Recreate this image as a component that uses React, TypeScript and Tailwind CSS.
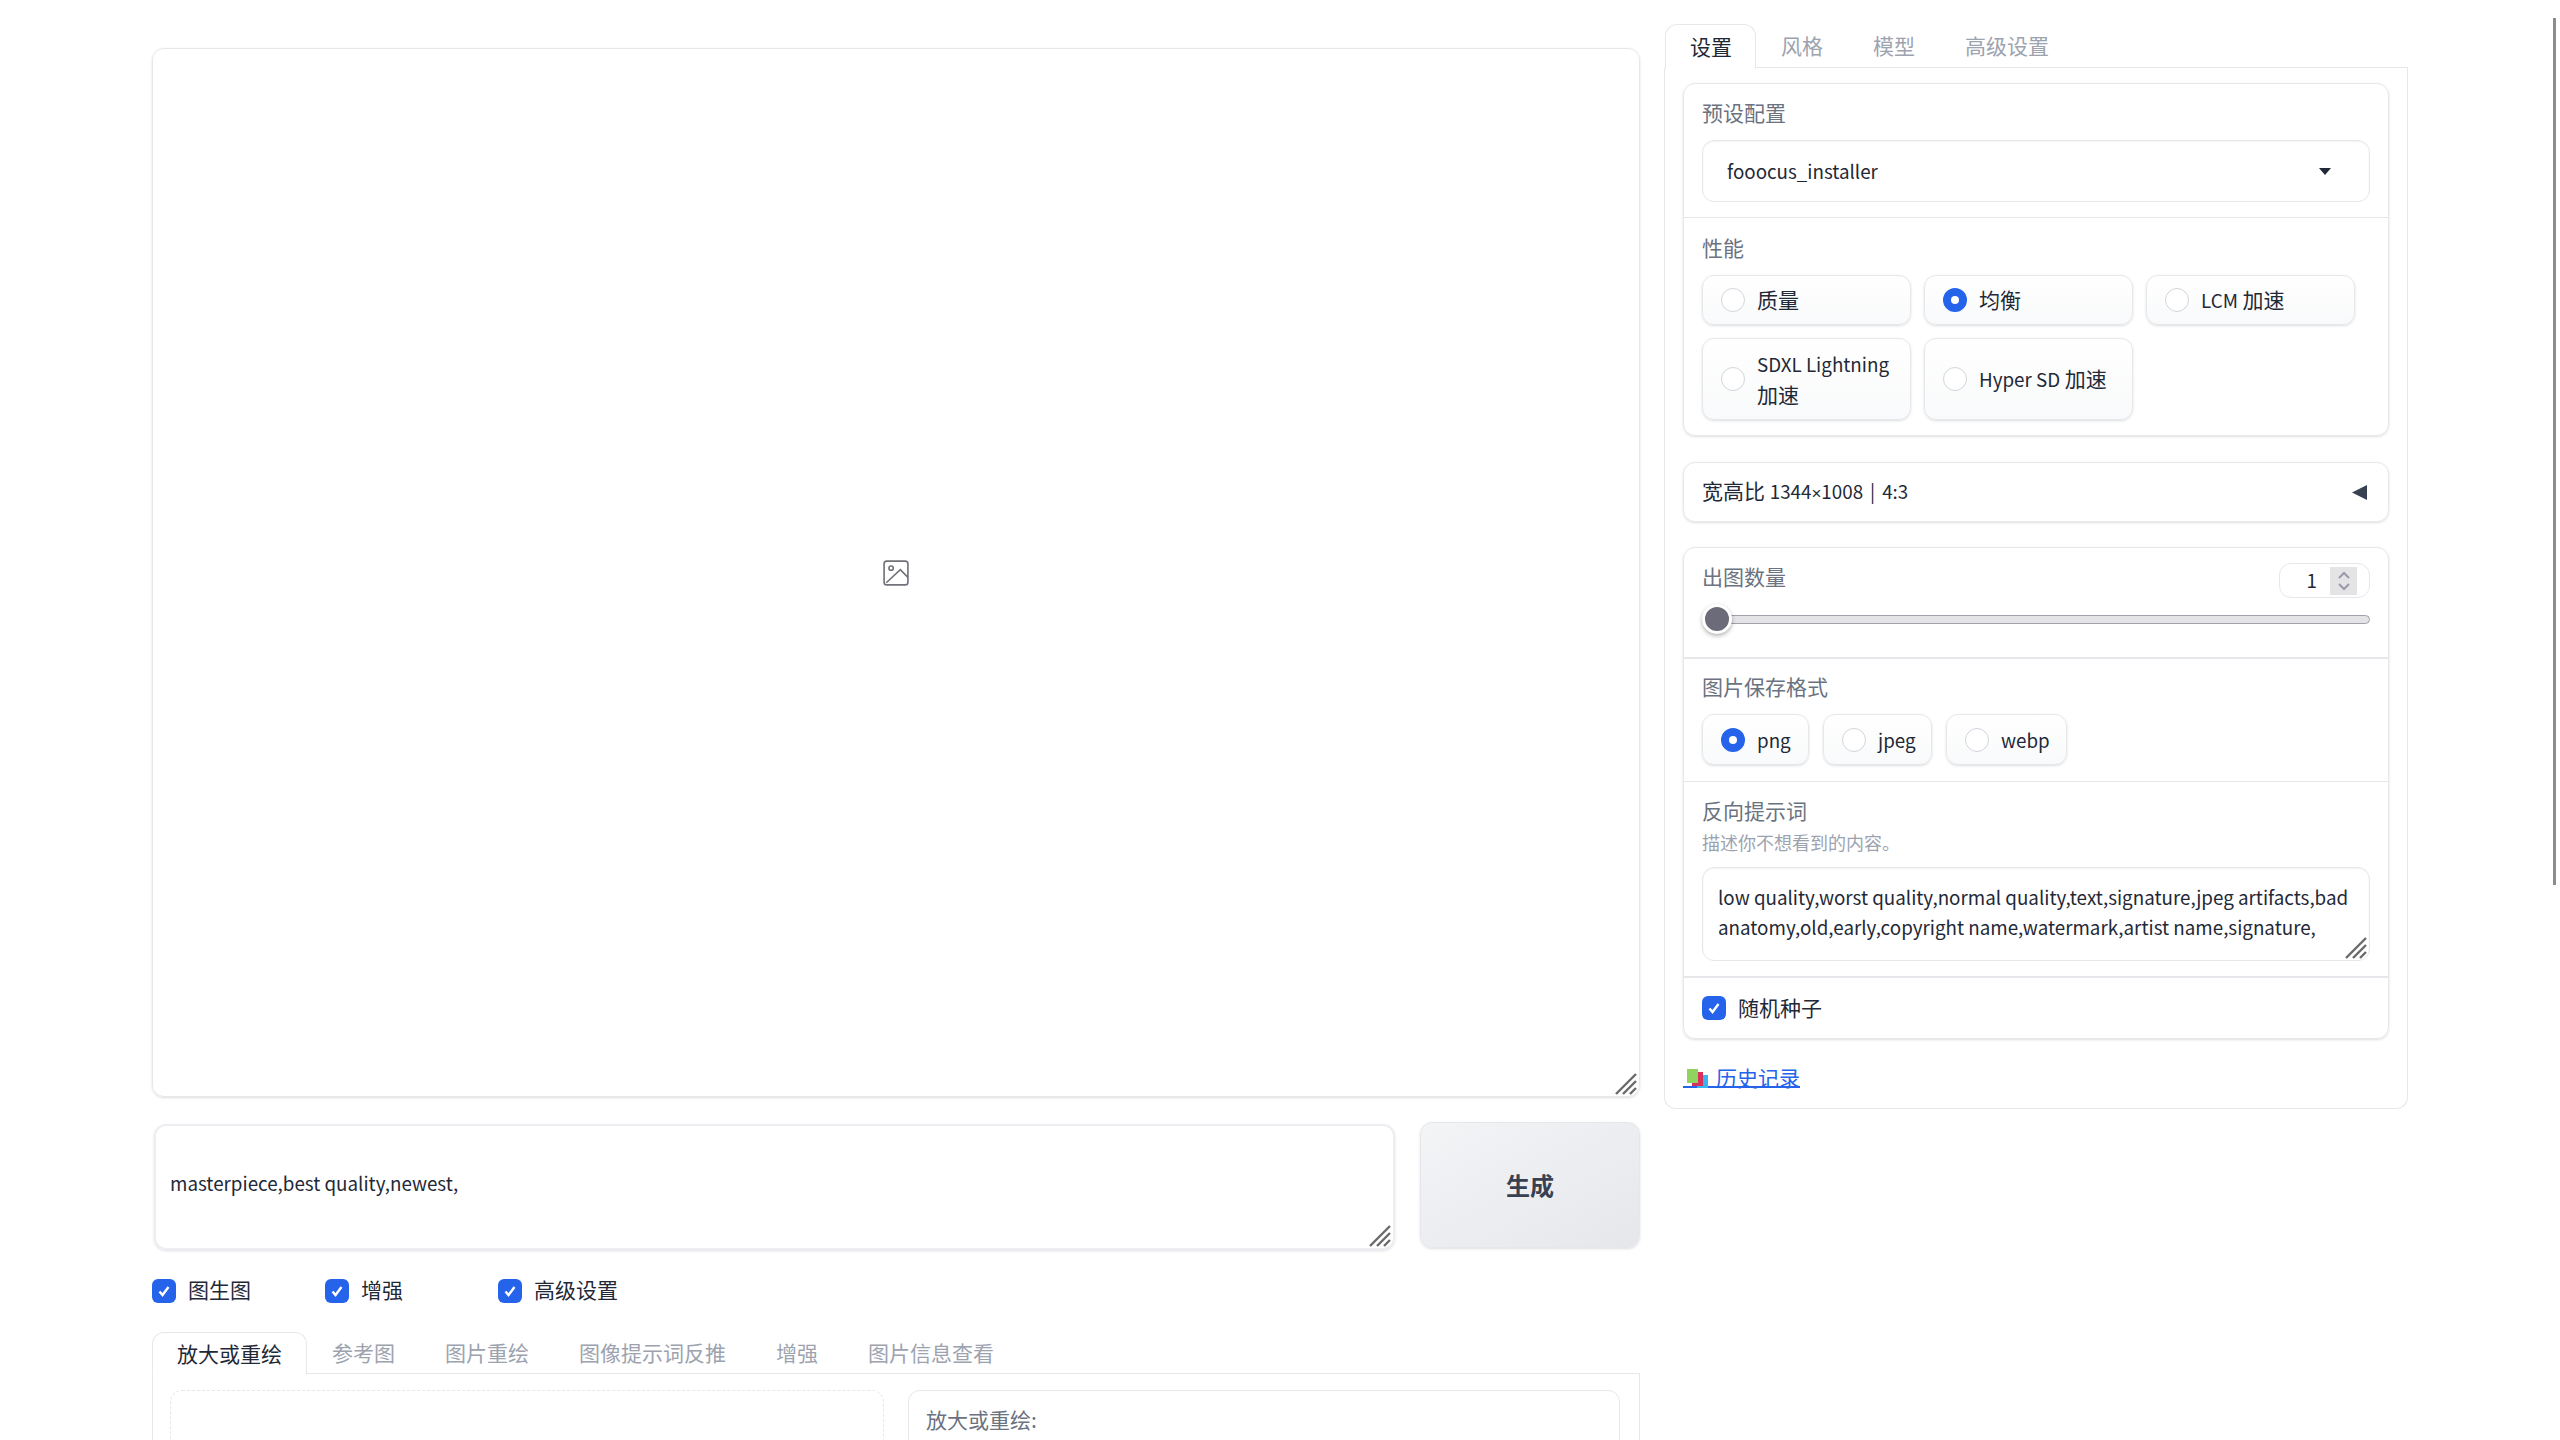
import React from 'react';

const Label = ({ children }: { children: React.ReactNode }) => (
  <div className="h-[30px] leading-[26px] text-[21px] text-[#6b7280]">{children}</div>
);

const En = ({ children }: { children: React.ReactNode }) => (
  <span className="text-[18.8px]">{children}</span>
);

const Handle = () => (
  <svg className="absolute right-[2px] bottom-[1px]" width="22" height="22" viewBox="0 0 22 22" fill="none" stroke="#6b6b6b" strokeWidth="2.4">
    <path d="M1 21 L21 1" />
    <path d="M8 21 L21 8" />
    <path d="M15 21 L21 15" />
  </svg>
);

const Check = () => (
  <span className="w-[24px] h-[24px] rounded-[6px] bg-[#2563eb] flex items-center justify-center shrink-0">
    <svg width="14" height="14" viewBox="0 0 14 14" fill="none" stroke="#fff" strokeWidth="2.4">
      <path d="M2.5 7.5 L5.5 11 L11.5 3" />
    </svg>
  </span>
);

const Radio = ({ label, on, className }: { label: React.ReactNode; on?: boolean; className: string }) => (
  <div className={`flex items-center gap-[12px] pl-[18px] pr-[8px] rounded-[12px] border border-[#e5e7eb] bg-gradient-to-b from-white to-[#f9fafb] shadow-sm ${className}`}>
    {on ? (
      <span className="w-[24px] h-[24px] rounded-full border-[8px] border-[#2563eb] bg-white shrink-0" />
    ) : (
      <span className="w-[24px] h-[24px] rounded-full border border-[#d1d5db] bg-white shrink-0" />
    )}
    <span className="-mt-[1px] text-[21px] leading-[31px] text-[#1f2937]">{label}</span>
  </div>
);

const tabs1 = ['风格', '模型', '高级设置'];
const tabs2 = ['参考图', '图片重绘', '图像提示词反推', '增强', '图片信息查看'];

export default function App() {
  return (
    <div className="relative h-[1440px] overflow-hidden bg-white flex items-start gap-[24px] pl-[152px] pt-[24px] font-['Noto_Sans_CJK_SC','Liberation_Sans',sans-serif] text-[#1f2937]">
      {/* left column */}
      <div className="w-[1488px] shrink-0 pt-[24px]">
        <div className="relative h-[1049px] rounded-[12px] border border-[#e5e7eb] shadow-sm flex items-center justify-center">
          <svg width="26" height="26" viewBox="0 0 24 24" fill="none" stroke="#71717a" strokeWidth="1.5">
            <rect x="1" y="1" width="22" height="22" rx="2.5" />
            <circle cx="7.5" cy="7.5" r="2" />
            <path d="M3 21 L16 9 L23 16" />
          </svg>
          <Handle />
        </div>

        <div className="mt-[25px] flex gap-[25px]">
          <div className="relative mt-[2px] ml-[2px] w-[1241px] h-[126px] rounded-[12px] border-2 border-[#eceef1] shadow-sm flex items-center pl-[14px] pb-[7px] text-[18.8px]">
            masterpiece,best quality,newest,
            <Handle />
          </div>
          <button className="w-[220px] h-[126px] rounded-[12px] border border-[#e5e7eb] bg-gradient-to-br from-[#f3f4f6] to-[#e5e7eb] shadow-sm text-[24px] font-bold text-[#374151]">
            生成
          </button>
        </div>

        <div className="mt-[29px] flex">
          {['图生图', '增强', '高级设置'].map(t => (
            <div key={t} className="w-[173px] flex items-center gap-[12px] h-[24px] text-[21px]">
              <Check />
              <span className="-mt-[2px]">{t}</span>
            </div>
          ))}
        </div>

        <div className="mt-[29px] flex h-[42px] border-b border-[#e5e7eb]">
          <div className="w-[155px] h-[43px] pl-[24px] leading-[40px] text-[21px] border border-[#e5e7eb] border-b-white rounded-t-[12px] bg-white">
            放大或重绘
          </div>
          {tabs2.map(t => (
            <div key={t} className="px-[25px] leading-[40px] text-[21px] text-[#9ca3af]">{t}</div>
          ))}
        </div>
        <div className="flex gap-[24px] h-[200px] border-x border-[#e5e7eb] px-[17px] pt-[16px]">
          <div className="w-[714px] h-[200px] rounded-[12px] border border-dashed border-[#e5e7eb]" />
          <div className="w-[712px] h-[200px] rounded-[12px] border border-[#e5e7eb] pl-[17px] pt-[15px]">
            <Label>放大或重绘:</Label>
          </div>
        </div>
      </div>

      {/* right column */}
      <div className="w-[744px] shrink-0">
        <div className="flex h-[44px] border-b border-[#e5e7eb] ml-[1px]">
          <div className="w-[91px] h-[45px] pl-[24px] leading-[42px] text-[21px] border border-[#e5e7eb] border-b-white rounded-t-[12px] bg-white">
            设置
          </div>
          {tabs1.map(t => (
            <div key={t} className="px-[25px] leading-[42px] text-[21px] text-[#9ca3af]">{t}</div>
          ))}
        </div>

        <div className="h-[1041px] border-x border-b border-[#e5e7eb] rounded-b-[12px] px-[18px] pt-[15px]">
          {/* preset + performance */}
          <div className="rounded-[12px] border border-[#e5e7eb] shadow-sm overflow-hidden">
            <div className="px-[18px] pt-[15px] pb-[15px] border-b border-[#e5e7eb]">
              <Label>预设配置</Label>
              <div className="mt-[11px] h-[62px] rounded-[12px] border border-[#e5e7eb] shadow-[inset_0_1px_2px_rgba(0,0,0,0.05)] flex items-center justify-between pl-[24px] pr-[38px] text-[18.8px]">
                <span>fooocus_installer</span>
                <svg width="12" height="7" viewBox="0 0 12 7" fill="#1f2937"><path d="M0 0 H12 L6 7 Z" /></svg>
              </div>
            </div>
            <div className="px-[18px] pt-[16px] pb-[15px]">
              <Label>性能</Label>
              <div className="mt-[11px] grid grid-cols-[repeat(3,209px)] gap-x-[13px] gap-y-[13px]">
                <Radio className="h-[50px]" label="质量" />
                <Radio className="h-[50px]" label="均衡" on />
                <Radio className="h-[50px]" label={<><En>LCM</En> 加速</>} />
                <Radio className="h-[82px]" label={<><En>SDXL Lightning</En><br />加速</>} />
                <Radio className="h-[82px]" label={<><En>Hyper SD</En> 加速</>} />
              </div>
            </div>
          </div>

          {/* aspect ratio */}
          <div className="mt-[26px] h-[60px] rounded-[12px] border border-[#e5e7eb] shadow-sm flex items-center justify-between pl-[18px] pr-[21px] text-[21px]">
            <span className="-mt-[2px]">
              宽高比 <En>1344<span className="font-['Liberation_Sans',sans-serif] text-[17px]">×</span>1008<span className="mx-[7px]">|</span>4:3</En>
            </span>
            <svg width="15" height="15" viewBox="0 0 15 15" fill="#374151"><path d="M15 0 V15 L0 7.5 Z" /></svg>
          </div>

          {/* image number, format, negative prompt, seed */}
          <div className="mt-[25px] rounded-[12px] border border-[#e5e7eb] shadow-sm overflow-hidden">
            <div className="px-[18px] pt-[15px] pb-[23px] border-b-2 border-[#e5e7eb]">
              <div className="flex items-center justify-between h-[35px]">
                <div className="-mt-[5px]"><Label>出图数量</Label></div>
                <div className="w-[91px] h-[35px] rounded-[12px] border border-[#e5e7eb] flex items-center justify-end pr-[12px] gap-[13px]">
                  <span className="text-[18.8px]">1</span>
                  <span className="w-[27px] h-[28px] bg-[#e4e4e7] flex items-center justify-center">
                    <svg width="14" height="20" viewBox="0 0 14 20" fill="none" stroke="#9a9aa8" strokeWidth="2">
                      <path d="M2 7 L7 2 L12 7" />
                      <path d="M2 13 L7 18 L12 13" />
                    </svg>
                  </span>
                </div>
              </div>
              <div className="relative mt-[6px] h-[30px] flex items-center">
                <div className="w-full h-[9px] rounded-full bg-[#e4e4e7] border border-[#a1a1aa]" />
                <div className="absolute left-0 top-0 w-[30px] h-[30px] rounded-full bg-[#6b6b7a] border-[3px] border-white shadow-[0_2px_4px_rgba(0,0,0,0.3)]" />
              </div>
            </div>
            <div className="px-[18px] pt-[14px] pb-[16px] border-b border-[#e5e7eb]">
              <Label>图片保存格式</Label>
              <div className="mt-[11px] flex gap-[14px]">
                <Radio className="h-[51px] w-[107px]" label={<En>png</En>} on />
                <Radio className="h-[51px] w-[109px]" label={<En>jpeg</En>} />
                <Radio className="h-[51px] w-[121px]" label={<En>webp</En>} />
              </div>
            </div>
            <div className="px-[18px] pt-[15px] pb-[15px] border-b-2 border-[#e5e7eb]">
              <Label>反向提示词</Label>
              <div className="mt-[4px] h-[24px] leading-[22px] text-[18px] text-[#9ca3af]">描述你不想看到的内容。</div>
              <div className="relative mt-[12px] h-[94px] rounded-[12px] border border-[#e5e7eb] shadow-[inset_0_1px_2px_rgba(0,0,0,0.05)] pl-[15px] pt-[14px] text-[18.8px] leading-[30px] whitespace-nowrap">
                low quality,worst quality,normal quality,text,signature,jpeg artifacts,bad
                <br />
                anatomy,old,early,copyright name,watermark,artist name,signature,
                <Handle />
              </div>
            </div>
            <div className="h-[60px] px-[18px] pt-[18px] flex items-start gap-[12px] text-[21px]">
              <Check />
              <span className="leading-[22px]">随机种子</span>
            </div>
          </div>

          {/* history link */}
          <a className="mt-[26px] inline-flex h-[23px] border-b-2 border-[#2563eb] text-[#2563eb] text-[21px] leading-[25px]">
            <svg className="ml-[4px] mr-[8px] mt-[4px]" width="21" height="19" viewBox="0 0 21 19">
              <rect x="10" y="6" width="11" height="13" fill="#38b6f1" />
              <rect x="5" y="3" width="11" height="14" fill="#d8315b" />
              <rect x="0" y="0" width="11" height="14" fill="#8fd45e" />
            </svg>
            <span>历史记录</span>
          </a>
        </div>
      </div>

      {/* page scrollbar */}
      <div className="absolute right-[4px] top-[18px] w-[3px] h-[867px] bg-[#8c8c8c]" />
    </div>
  );
}
